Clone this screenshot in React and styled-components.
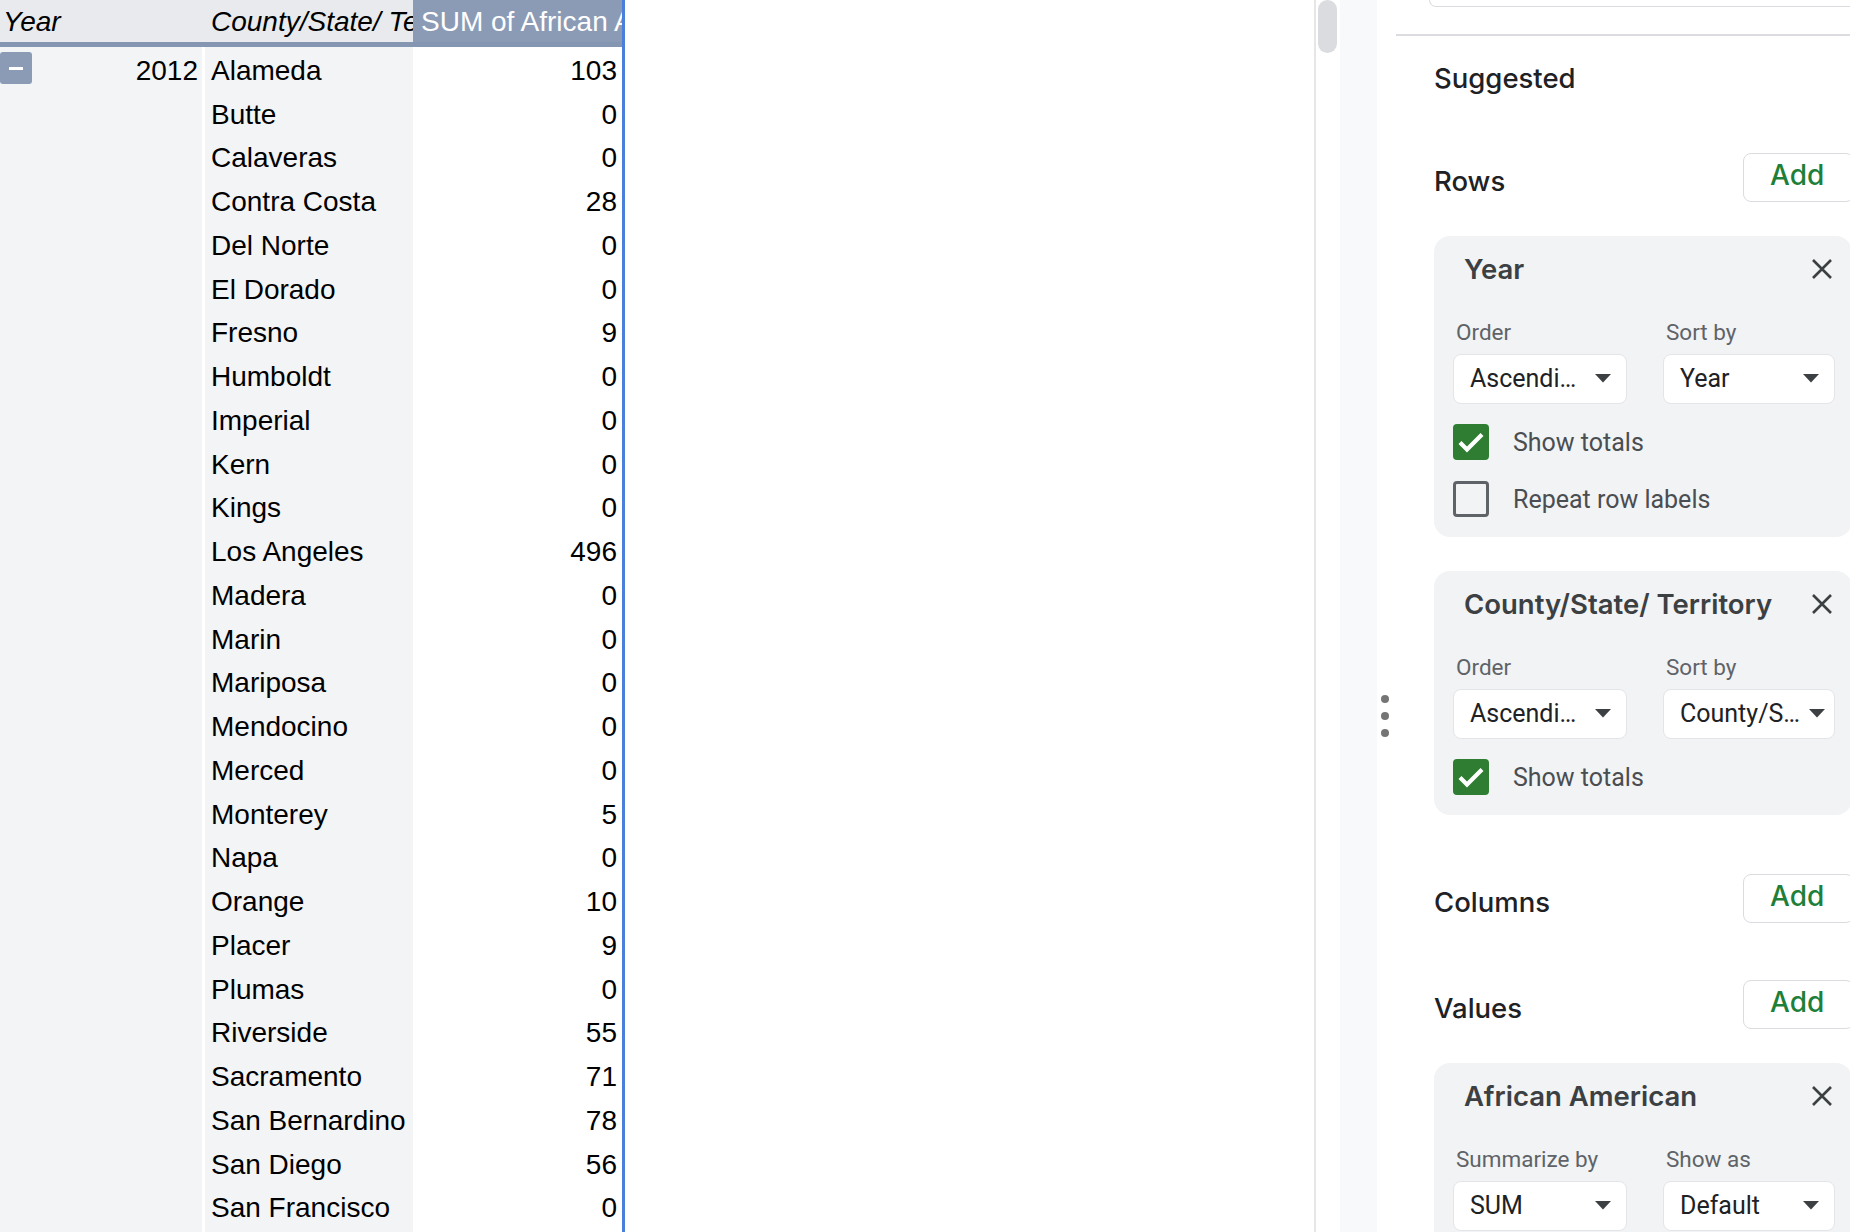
import React from "react"
import styled, { createGlobalStyle } from "styled-components"

const GlobalStyle = createGlobalStyle`
  html, body {
    margin: 0;
    padding: 0;
    background: #fff;
  }
  body {
    font-family: "Liberation Sans", Arial, sans-serif;
  }
`

const Page = styled.div`
  display: flex;
  width: 1850px;
  height: 1232px;
  overflow: hidden;
  background: #fff;
`

const Table = styled.div`
  display: grid;
  grid-template-columns: 202px 211px 209px;
  grid-template-rows: 47px;
  grid-auto-rows: 43.75px;
  align-content: start;
  flex: none;
  height: 100%;
  border-right: 3px solid #4a80dc;
  background: linear-gradient(
    to right,
    #f3f4f6 0 202px,
    #fff 202px 205px,
    #f3f4f6 205px 413px,
    #fff 413px
  );
  font-family: "Liberation Sans", Arial, sans-serif;
  font-size: 28px;
  color: #000;
`

const HeadCell = styled.div`
  display: flex;
  align-items: flex-end;
  padding: 0 ${(p) => (p.$value ? "0 4px 8px" : "0 4px 3px")};
  border-bottom: 5px solid #8596b2;
  background: ${(p) => (p.$value ? "#8b9bb6" : "#e8eaed")};
  color: ${(p) => (p.$value ? "#fff" : "#000")};
  font-style: ${(p) => (p.$value ? "normal" : "italic")};
  white-space: nowrap;
  overflow: hidden;
  ${(p) => p.$county && "padding-left: 9px;"}
`

const Cell = styled.div`
  display: flex;
  align-items: flex-end;
  justify-content: ${(p) => (p.$right ? "flex-end" : "flex-start")};
  padding: 0 5px 4px ${(p) => (p.$county ? "6px" : "0")};
  white-space: nowrap;
  overflow: hidden;
  background: ${(p) => (p.$white ? "#fff" : "#f3f4f6")};
  ${(p) => p.$county && "border-left: 3px solid #fff;"}
`

const YearCell = styled(Cell)`
  justify-content: space-between;
  padding-right: 4px;
`

const Collapse = styled.div`
  align-self: flex-start;
  width: 32px;
  height: 32px;
  margin-top: 5px;
  border-radius: 3px;
  background: #8b9bb6;
  display: flex;
  align-items: center;
  justify-content: center;
  &::after {
    content: "";
    width: 14px;
    height: 3px;
    background: #fff;
  }
`

const Blank = styled.div`
  flex: 1;
`

const Gutter = styled.div`
  width: 22px;
  flex: none;
  border-left: 2px solid #e6e6e6;
  padding-left: 2px;
`

const Thumb = styled.div`
  width: 19px;
  height: 53px;
  border-radius: 10px;
  background: #dadce0;
`

const Strip = styled.div`
  width: 37px;
  flex: none;
  background: #f8f9fa;
`

const Panel = styled.div`
  position: relative;
  width: 473px;
  flex: none;
  overflow: hidden;
  font-family: Roboto, "Liberation Sans", sans-serif;
`

const Handle = styled.div`
  position: absolute;
  left: 4px;
  top: 695px;
  display: flex;
  flex-direction: column;
  gap: 9px;
  & span {
    width: 8px;
    height: 8px;
    border-radius: 50%;
    background: #757575;
  }
`

const RangeBox = styled.div`
  margin-left: 52px;
  width: 440px;
  height: 6px;
  border: 1px solid #dadce0;
  border-top: none;
  border-radius: 0 0 8px 8px;
`

const Divider = styled.div`
  margin: 27px 0 0 19px;
  height: 2px;
  background: #dadce0;
`

const Content = styled.div`
  padding-left: 57px;
  width: 418px;
  display: flex;
  flex-direction: column;
`

const SectionHead = styled.div`
  display: flex;
  align-items: center;
  justify-content: space-between;
  height: ${(p) => (p.$tall ? "49px" : "34px")};
  margin-top: ${(p) => p.$top}px;
`

const SectionTitle = styled.div`
  font-family: Inter, "Open Sans", sans-serif;
  font-weight: 500;
  font-size: 27.5px;
  color: #202124;
  padding-top: ${(p) => (p.$low ? "6px" : "0")};
`

const AddButton = styled.div`
  width: 111px;
  height: 49px;
  box-sizing: border-box;
  margin-right: -2px;
  border: 1px solid #dadce0;
  border-radius: 8px;
  background: #fff;
  display: flex;
  align-items: center;
  padding: 0 0 5px 26px;
  font-family: Inter, "Open Sans", sans-serif;
  font-weight: 500;
  font-size: 28px;
  color: #1e8038;
`

const Card = styled.div`
  margin-top: ${(p) => p.$top}px;
  padding: 16px 19px 20px 19px;
  border-radius: 16px;
  background: #f1f3f4;
  display: flex;
  flex-direction: column;
`

const CardHead = styled.div`
  display: flex;
  align-items: center;
  justify-content: space-between;
  height: 34px;
  padding-left: 11px;
`

const CardTitle = styled.div`
  font-family: Inter, "Open Sans", sans-serif;
  font-weight: 600;
  font-size: 27.5px;
  color: #3c4043;
`

const Fields = styled.div`
  display: grid;
  grid-template-columns: 174px 172px;
  column-gap: 36px;
  margin-top: 33px;
`

const Field = styled.div`
  display: flex;
  flex-direction: column;
`

const Label = styled.div`
  font-size: 22.5px;
  line-height: 26px;
  color: #5f6368;
  padding-left: 3px;
  margin-bottom: 9px;
`

const Select = styled.div`
  height: 50px;
  box-sizing: border-box;
  border: 1px solid #e3e5e8;
  border-radius: 8px;
  background: #fff;
  display: flex;
  align-items: center;
  justify-content: space-between;
  padding: 0 ${(p) => (p.$tight ? "9px" : "15px")} 2px 16px;
  font-size: 25px;
  color: #202124;
  white-space: nowrap;
`

const CheckRow = styled.div`
  display: flex;
  align-items: center;
  gap: 24px;
  margin-top: ${(p) => p.$top}px;
  font-size: 25px;
  color: #4a4d51;
`

const Box = styled.div`
  width: 36px;
  height: 36px;
  box-sizing: border-box;
  border-radius: 4px;
  display: flex;
  align-items: center;
  justify-content: center;
  background: ${(p) => (p.$on ? "#2e7d32" : "transparent")};
  border: ${(p) => (p.$on ? "none" : "3px solid #5f6368")};
`

function CloseIcon() {
  return (
    <svg width="22" height="22" viewBox="0 0 22 22">
      <path d="M2 2L20 20M20 2L2 20" stroke="#3c4043" strokeWidth="2.6" />
    </svg>
  )
}

function Caret() {
  return (
    <svg width="16" height="9" viewBox="0 0 16 9">
      <path d="M0 0H16L8 8.5Z" fill="#3c4043" />
    </svg>
  )
}

function Checkbox({ on }) {
  return (
    <Box $on={on}>
      {on && (
        <svg width="30" height="30" viewBox="0 0 30 30">
          <path
            d="M4 15.5L11 22.5L26 7.5"
            stroke="#fff"
            strokeWidth="4.2"
            fill="none"
          />
        </svg>
      )}
    </Box>
  )
}

const rows = [
  ["Alameda", 103],
  ["Butte", 0],
  ["Calaveras", 0],
  ["Contra Costa", 28],
  ["Del Norte", 0],
  ["El Dorado", 0],
  ["Fresno", 9],
  ["Humboldt", 0],
  ["Imperial", 0],
  ["Kern", 0],
  ["Kings", 0],
  ["Los Angeles", 496],
  ["Madera", 0],
  ["Marin", 0],
  ["Mariposa", 0],
  ["Mendocino", 0],
  ["Merced", 0],
  ["Monterey", 5],
  ["Napa", 0],
  ["Orange", 10],
  ["Placer", 9],
  ["Plumas", 0],
  ["Riverside", 55],
  ["Sacramento", 71],
  ["San Bernardino", 78],
  ["San Diego", 56],
  ["San Francisco", 0],
]

function FieldCard({ top, title, fields, checks }) {
  return (
    <Card $top={top}>
      <CardHead>
        <CardTitle>{title}</CardTitle>
        <CloseIcon />
      </CardHead>
      <Fields>
        {fields.map((f) => (
          <Field key={f.label}>
            <Label>{f.label}</Label>
            <Select $tight={f.tight}>
              <span>{f.value}</span>
              <Caret />
            </Select>
          </Field>
        ))}
      </Fields>
      {checks &&
        checks.map((c, i) => (
          <CheckRow key={c.text} $top={i === 0 ? 20 : 21}>
            <Checkbox on={c.on} />
            {c.text}
          </CheckRow>
        ))}
    </Card>
  )
}

export default function App() {
  return (
    <Page>
      <GlobalStyle />
      <Table>
        <HeadCell>Year</HeadCell>
        <HeadCell $county>County/State/ Territory</HeadCell>
        <HeadCell $value>SUM of African American</HeadCell>
        {rows.map(([name, value], i) => (
          <React.Fragment key={name}>
            {i === 0 ? (
              <YearCell>
                <Collapse />
                2012
              </YearCell>
            ) : (
              <Cell />
            )}
            <Cell $county>{name}</Cell>
            <Cell $white $right>
              {value}
            </Cell>
          </React.Fragment>
        ))}
      </Table>
      <Blank />
      <Gutter>
        <Thumb />
      </Gutter>
      <Strip />
      <Panel>
        <Handle>
          <span />
          <span />
          <span />
        </Handle>
        <RangeBox />
        <Divider />
        <Content>
          <SectionHead $top={25}>
            <SectionTitle>Suggested</SectionTitle>
          </SectionHead>
          <SectionHead $tall $top={58}>
            <SectionTitle $low>Rows</SectionTitle>
            <AddButton>Add</AddButton>
          </SectionHead>
          <FieldCard
            top={34}
            title="Year"
            fields={[
              { label: "Order", value: "Ascendi…" },
              { label: "Sort by", value: "Year" },
            ]}
            checks={[
              { text: "Show totals", on: true },
              { text: "Repeat row labels", on: false },
            ]}
          />
          <FieldCard
            top={34}
            title="County/State/ Territory"
            fields={[
              { label: "Order", value: "Ascendi…" },
              { label: "Sort by", value: "County/S…", tight: true },
            ]}
            checks={[{ text: "Show totals", on: true }]}
          />
          <SectionHead $tall $top={59}>
            <SectionTitle $low>Columns</SectionTitle>
            <AddButton>Add</AddButton>
          </SectionHead>
          <SectionHead $tall $top={57}>
            <SectionTitle $low>Values</SectionTitle>
            <AddButton>Add</AddButton>
          </SectionHead>
          <FieldCard
            top={34}
            title="African American"
            fields={[
              { label: "Summarize by", value: "SUM" },
              { label: "Show as", value: "Default" },
            ]}
          />
        </Content>
      </Panel>
    </Page>
  )
}
